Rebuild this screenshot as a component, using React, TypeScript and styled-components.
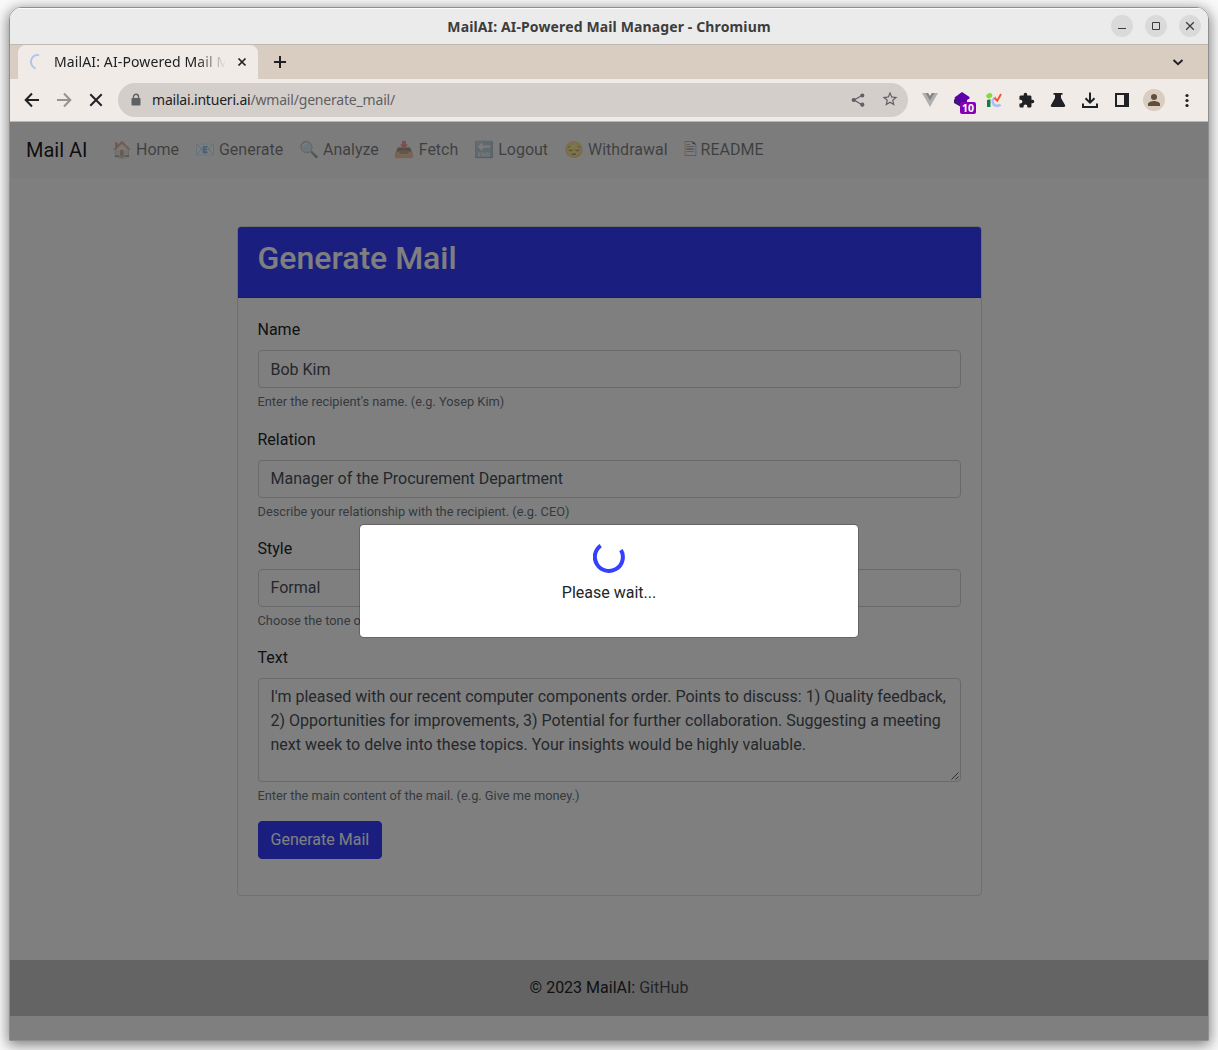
import React from 'react';
import styled, { createGlobalStyle } from 'styled-components';

const Global = createGlobalStyle`
  *, *::before, *::after { box-sizing: border-box; }
  body { margin: 0; background: #fff; overflow: hidden; }
`;

const UI_FONT = '"Noto Sans", "Open Sans", sans-serif';

const Desktop = styled.div`
  height: 1050px;
  padding: 7px 9px 9px;
  background: #fafafa;
  overflow: hidden;
`;

const Window = styled.div`
  display: flex;
  flex-direction: column;
  width: 1200px;
  height: 1034px;
  border: 1px solid #8f8f8f;
  border-radius: 12px 12px 0 0;
  overflow: hidden;
  box-shadow: 0 3px 14px 1px rgba(0, 0, 0, 0.5);
  font-family: ${UI_FONT};
`;

const TitleBar = styled.header`
  display: grid;
  grid-template-columns: 1fr auto 1fr;
  align-items: center;
  flex: none;
  height: 37px;
  background: #ebebeb;
  border-top: 1px solid #fcfcfc;
  border-bottom: 1px solid #bdbab6;
`;

const WindowTitle = styled.div`
  grid-column: 2;
  font-size: 14px;
  font-weight: 700;
  line-height: 20px;
  letter-spacing: 0.13px;
  color: #3d3d3d;
  white-space: nowrap;
`;

const WindowButtons = styled.div`
  display: flex;
  justify-content: flex-end;
  gap: 12px;
  margin: -2px 7px 0 0;
`;

const WindowButton = styled.span`
  display: grid;
  place-items: center;
  width: 22px;
  height: 22px;
  border-radius: 50%;
  background: #dadada;
`;

const TabStrip = styled.div`
  display: flex;
  align-items: center;
  flex: none;
  height: 34px;
  padding: 0 22px 0 8px;
  background: #d9ccc0;
`;

const Tab = styled.div`
  display: flex;
  align-items: center;
  width: 240px;
  height: 34px;
  padding: 0 8px 0 11px;
  border-radius: 8px 8px 0 0;
  background: #f0ebe6;
`;

const TabTitle = styled.div`
  flex: 1;
  margin: 0 8px 0 9px;
  overflow: hidden;
  white-space: nowrap;
  font-size: 14px;
  line-height: 20px;
  letter-spacing: 0.12px;
  color: #202124;
  mask-image: linear-gradient(to right, #000 142px, transparent 172px);
`;

const NewTab = styled.span`
  display: flex;
  margin-left: 15px;
`;

const Spacer = styled.span`
  flex: 1;
`;

const Toolbar = styled.div`
  display: flex;
  align-items: center;
  flex: none;
  height: 43px;
  padding: 0 10px 0 12px;
  background: #f0ebe6;
  border-bottom: 1px solid #bab6b2;
`;

const NavIcons = styled.div`
  display: flex;
  gap: 12px;
`;

const Address = styled.div`
  display: flex;
  align-items: center;
  width: 790px;
  height: 34px;
  margin: 0 10px 0 12px;
  padding: 0 9px 0 8px;
  border-radius: 17px;
  background: #d4cecb;
`;

const Url = styled.div`
  flex: 1;
  margin-left: 6px;
  font-size: 14px;
  line-height: 20px;
  color: #5f5f62;
  white-space: nowrap;
`;

const Host = styled.span`
  color: #202124;
  letter-spacing: -0.2px;
`;

const Path = styled.span`
  letter-spacing: -0.19px;
`;

const AddressActions = styled.div`
  display: flex;
  gap: 13px;
`;

const Extensions = styled.div`
  display: flex;
  align-items: center;
  gap: 8px;
`;

const ExtensionSlot = styled.span`
  position: relative;
  display: grid;
  place-items: center;
  width: 24px;
  height: 24px;
`;

const CountBadge = styled.span`
  position: absolute;
  left: 10px;
  top: 14px;
  width: 16px;
  height: 12px;
  border-radius: 2px;
  background: #8500b5;
  color: #fff;
  font: 700 10.5px/12px ${UI_FONT};
  text-align: center;
`;

const Avatar = styled.span`
  display: grid;
  place-items: center;
  width: 22px;
  height: 22px;
  margin: 0 1px;
  border-radius: 50%;
  background: #d9ccc0;
`;

const Page = styled.main`
  position: relative;
  display: flex;
  flex-direction: column;
  flex: 1;
  background: #fff;
  color: #212529;
  font: 400 16px/24px Roboto, sans-serif;
`;

const Navbar = styled.nav`
  display: flex;
  align-items: center;
  height: 56px;
  padding: 0 16px;
  background: #f8f9fa;
`;

const Brand = styled.a`
  margin-right: 16.6px;
  font-size: 20px;
  line-height: 30px;
  color: rgba(0, 0, 0, 0.9);
  white-space: nowrap;
`;

const NavLink = styled.a`
  display: flex;
  align-items: center;
  padding: 0 8px;
  color: rgba(0, 0, 0, 0.5);
  white-space: pre;
`;

const Emoji = styled.span`
  font-family: "Noto Color Emoji", "DejaVu Sans", sans-serif;
`;

const Card = styled.section`
  width: 745px;
  height: 670px;
  margin: 48px 0 0 226.500px;
  border: 1px solid rgba(0, 0, 0, 0.125);
  border-radius: 4px;
  overflow: hidden;
`;

const CardHeader = styled.header`
  height: 71.4px;
  padding: 12px 20px;
  background: #343fff;
  border-bottom: 1px solid rgba(0, 0, 0, 0.125);
`;

const Heading = styled.h2`
  margin: 0;
  font-size: 32px;
  font-weight: 500;
  line-height: 38.4px;
  color: #fff;
`;

const Form = styled.div`
  padding: 20px;
`;

const Group = styled.div`
  margin-bottom: 16px;
`;

const Label = styled.label`
  display: block;
  margin-bottom: 8px;
`;

const Field = styled.div<{ $height?: number }>`
  position: relative;
  height: ${(p) => p.$height ?? 38}px;
  padding: ${(p) => (p.$height ? 6 : 6.15)}px 12px 0;
  border: 1px solid #ced4da;
  border-radius: 4px;
  color: #495057;
`;

const Grip = styled.svg`
  position: absolute;
  right: 1px;
  bottom: 1px;
`;

const Help = styled.small`
  display: block;
  margin-top: 4px;
  font-size: 12.8px;
  line-height: 19.2px;
  color: #6c757d;
`;

const Submit = styled.button`
  display: block;
  height: 38px;
  padding: 0 12px;
  border: 1px solid #343fff;
  border-radius: 4px;
  background: #343fff;
  color: #fff;
  font: inherit;
`;

const Footer = styled.footer`
  height: 56px;
  margin-top: 64px;
  padding: 16px;
  background: #c8c8c8;
  text-align: center;
`;

const FooterLink = styled.a`
  color: #454a50;
`;

const Backdrop = styled.div`
  position: absolute;
  inset: 0;
  background: rgba(0, 0, 0, 0.5);
`;

const Modal = styled.div`
  position: absolute;
  left: 349px;
  top: 402px;
  display: flex;
  flex-direction: column;
  align-items: center;
  width: 500px;
  height: 114px;
  padding: 16px;
  border: 1px solid rgba(0, 0, 0, 0.2);
  border-radius: 4.8px;
  background: #fff;
  background-clip: padding-box;
`;

const WaitText = styled.p`
  margin: 8px 0 0;
`;

type IconProps = { d: string; color?: string; size?: number };

const Icon = ({ d, color = '#202124', size = 20 }: IconProps) => (
  <svg width={size} height={size} viewBox="0 0 24 24" fill={color}>
    <path d={d} />
  </svg>
);

const links = [
  ['🏠', ' Home'],
  ['📧', ' Generate'],
  ['🔍', ' Analyze'],
  ['📥', ' Fetch'],
  ['🔚', ' Logout'],
  ['😔', ' Withdrawal'],
  ['🖹', ' README'],
];

const fields = [
  { label: 'Name', value: 'Bob Kim', help: "Enter the recipient's name. (e.g. Yosep Kim)" },
  { label: 'Relation', value: 'Manager of the Procurement Department', help: 'Describe your relationship with the recipient. (e.g. CEO)' },
  { label: 'Style', value: 'Formal', help: 'Choose the tone of the mail.' },
];

const BrowserTitle = () => (
  <TitleBar>
    <WindowTitle>MailAI: AI-Powered Mail Manager - Chromium</WindowTitle>
    <WindowButtons>
      <WindowButton>
        <svg width="22" height="22" stroke="#3d3d3d"><path d="M7 13.5h8" /></svg>
      </WindowButton>
      <WindowButton>
        <svg width="22" height="22" stroke="#3d3d3d" fill="none"><path d="M7.5 7.5h7v7h-7z" /></svg>
      </WindowButton>
      <WindowButton>
        <svg width="22" height="22" stroke="#3d3d3d" strokeWidth="1.3"><path d="M7.2 7.2l7.6 7.6M14.8 7.2l-7.6 7.6" /></svg>
      </WindowButton>
    </WindowButtons>
  </TitleBar>
);

const BrowserTabs = () => (
  <TabStrip>
    <Tab>
      <svg width="16" height="16" fill="none" stroke="#afc5ee" strokeWidth="2">
        <path d="M10 1.2C5 .3 1.8 4 2 8c.1 3 2 5.400 4.500 6.500" />
      </svg>
      <TabTitle>MailAI: AI-Powered Mail Manager</TabTitle>
      <svg width="16" height="16" stroke="#202124" strokeWidth="1.7"><path d="M4.500 4.500l7 7M11.500 4.500l-7 7" /></svg>
    </Tab>
    <NewTab>
      <svg width="14" height="14" stroke="#202124" strokeWidth="2"><path d="M7 1v12M1 7h12" /></svg>
    </NewTab>
    <Spacer />
    <svg width="16" height="16" fill="none" stroke="#202124" strokeWidth="1.9"><path d="M3.500 6L8 10.300 12.500 6" /></svg>
  </TabStrip>
);

const BrowserToolbar = () => (
  <Toolbar>
    <NavIcons>
      <svg width="20" height="20" fill="none" stroke="#202124" strokeWidth="2"><path d="M17 10H4.500M10 3.500L3.700 10l6.300 6.500" /></svg>
      <svg width="20" height="20" fill="none" stroke="#96928f" strokeWidth="2"><path d="M3 10h12.500M10 3.500l6.300 6.500-6.300 6.500" /></svg>
      <svg width="20" height="20" fill="none" stroke="#202124" strokeWidth="2"><path d="M4.300 4.300l11.400 11.400M15.700 4.300L4.300 15.700" /></svg>
    </NavIcons>
    <Address>
      <svg width="20" height="20" fill="none">
        <rect x="5.500" y="8" width="9" height="7.500" rx="1" fill="#5f6064" />
        <path d="M7.500 8V6.700a2.500 2.500 0 015 0V8" stroke="#5f6064" strokeWidth="1.400" />
      </svg>
      <Url><Host>mailai.intueri.ai</Host><Path>/wmail/generate_mail/</Path></Url>
      <AddressActions>
        <svg width="20" height="20" fill="#5f6064" stroke="#5f6064" strokeWidth="1.200">
          <path d="M14 5.500L6 10l8 4.700" fill="none" />
          <circle cx="14.300" cy="5.500" r="1.500" /><circle cx="5.700" cy="10" r="1.500" /><circle cx="14.300" cy="14.700" r="1.500" />
        </svg>
        <Icon size={18} color="#5f6064" d="M22 9.240l-7.190-.620L12 2 9.190 8.630 2 9.240l5.460 4.730L5.820 21 12 17.270 18.180 21l-1.630-7.030L22 9.240zM12 15.400l-3.760 2.270 1-4.280-3.320-2.880 4.380-.380L12 6.100l1.710 4.040 4.380.380-3.320 2.880 1 4.280L12 15.400z" />
      </AddressActions>
    </Address>
    <Extensions>
      <ExtensionSlot>
        <svg width="16" height="16"><path d="M0 1h3.200L8 9l4.800-8H16L8 15z" fill="#b0b0b0" /><path d="M3.200 1h3L8 4l1.800-3h3L8 9z" fill="#858585" /></svg>
      </ExtensionSlot>
      <ExtensionSlot>
        <svg width="18" height="18"><path d="M9 1l7.500 5v1.500L14 9v4H9L5 11 2 8l-.5-1.500z" fill="#5c00aa" /><path d="M1 8.500l2.500-1L9 11v5.500L1 12z" fill="#3f147c" /></svg>
        <CountBadge>10</CountBadge>
      </ExtensionSlot>
      <ExtensionSlot>
        <svg width="18" height="16" fill="none">
          <ellipse cx="4.300" cy="3.700" rx="3.100" ry="2.500" fill="#83dc36" transform="rotate(-25 4.300 3.700)" />
          <path d="M2 8l3.500-.7V15H2z" fill="#127c48" />
          <path d="M11 5.500c-3 .5-4 3-3 5.500 1.200 3.400 5.500 3.500 7.500 1.500" stroke="#adc0f3" strokeWidth="2.600" />
          <path d="M9.500 6l2.800 2.700L16 2" stroke="#ff4d25" strokeWidth="1.900" />
        </svg>
      </ExtensionSlot>
      <ExtensionSlot>
        <Icon size={17} d="M20.500 11H19V7c0-1.100-.9-2-2-2h-4V3.500a2.500 2.500 0 00-5 0V5H4c-1.100 0-1.990.9-1.990 2v3.800H3.500a2.700 2.700 0 010 5.400H2V20c0 1.100.9 2 2 2h3.800v-1.500a2.700 2.700 0 015.400 0V22H17c1.100 0 2-.9 2-2v-4h1.500a2.500 2.500 0 000-5z" />
      </ExtensionSlot>
      <ExtensionSlot>
        <svg width="16" height="16" fill="#202124"><path d="M3.500 1h9v1.800H11V6l4 7c.6 1.200 0 2-1.200 2H2.200C1 15 .4 14.200 1 13l4-7V2.800H3.500z" /></svg>
      </ExtensionSlot>
      <ExtensionSlot>
        <svg width="18" height="18" fill="none" stroke="#202124" strokeWidth="2"><path d="M9 1.500v10M4.500 7.200L9 11.700l4.500-4.500M2 12.500V16h14v-3.500" /></svg>
      </ExtensionSlot>
      <ExtensionSlot>
        <svg width="14" height="14" fill="#202124"><path fillRule="evenodd" d="M0 0h14v14H0zM2 2v10h7V2z" /></svg>
      </ExtensionSlot>
      <Avatar>
        <svg width="14" height="14" fill="#614d3c"><circle cx="7" cy="4" r="3" /><path d="M1 13v-2c0-2 4-3 6-3s6 1 6 3v2z" /></svg>
      </Avatar>
      <ExtensionSlot>
        <svg width="5" height="16" fill="#202124"><circle cx="3" cy="3.500" r="1.600" /><circle cx="3" cy="8.500" r="1.600" /><circle cx="3" cy="13.500" r="1.600" /></svg>
      </ExtensionSlot>
    </Extensions>
  </Toolbar>
);

export default function App() {
  return (
    <Desktop>
      <Global />
      <Window>
        <BrowserTitle />
        <BrowserTabs />
        <BrowserToolbar />
        <Page>
          <Navbar>
            <Brand>Mail AI</Brand>
            {links.map(([emoji, text]) => (
              <NavLink key={text}><Emoji>{emoji}</Emoji>{text}</NavLink>
            ))}
          </Navbar>
          <Card>
            <CardHeader><Heading>Generate Mail</Heading></CardHeader>
            <Form>
              {fields.map((f) => (
                <Group key={f.label}>
                  <Label>{f.label}</Label>
                  <Field>{f.value}</Field>
                  <Help>{f.help}</Help>
                </Group>
              ))}
              <Group>
                <Label>Text</Label>
                <Field $height={104}>
                  I'm pleased with our recent computer components order. Points to discuss: 1) Quality feedback, 2) Opportunities for improvements, 3) Potential for further collaboration. Suggesting a meeting next week to delve into these topics. Your insights would be highly valuable.
                  <Grip width="8" height="8" stroke="#333" strokeWidth="0.8"><path d="M0.500 7.500L7.500 .5M4.500 7.500L7.500 4.500" /></Grip>
                </Field>
                <Help>Enter the main content of the mail. (e.g. Give me money.)</Help>
              </Group>
              <Submit>Generate Mail</Submit>
            </Form>
          </Card>
          <Footer>© 2023 MailAI: <FooterLink>GitHub</FooterLink></Footer>
          <Backdrop />
          <Modal>
            <svg width="32" height="32" fill="none" stroke="#343fff" strokeWidth="4">
              <path d="M7.700 4.600A14 14 0 1 0 28 9" />
            </svg>
            <WaitText>Please wait...</WaitText>
          </Modal>
        </Page>
      </Window>
    </Desktop>
  );
}
